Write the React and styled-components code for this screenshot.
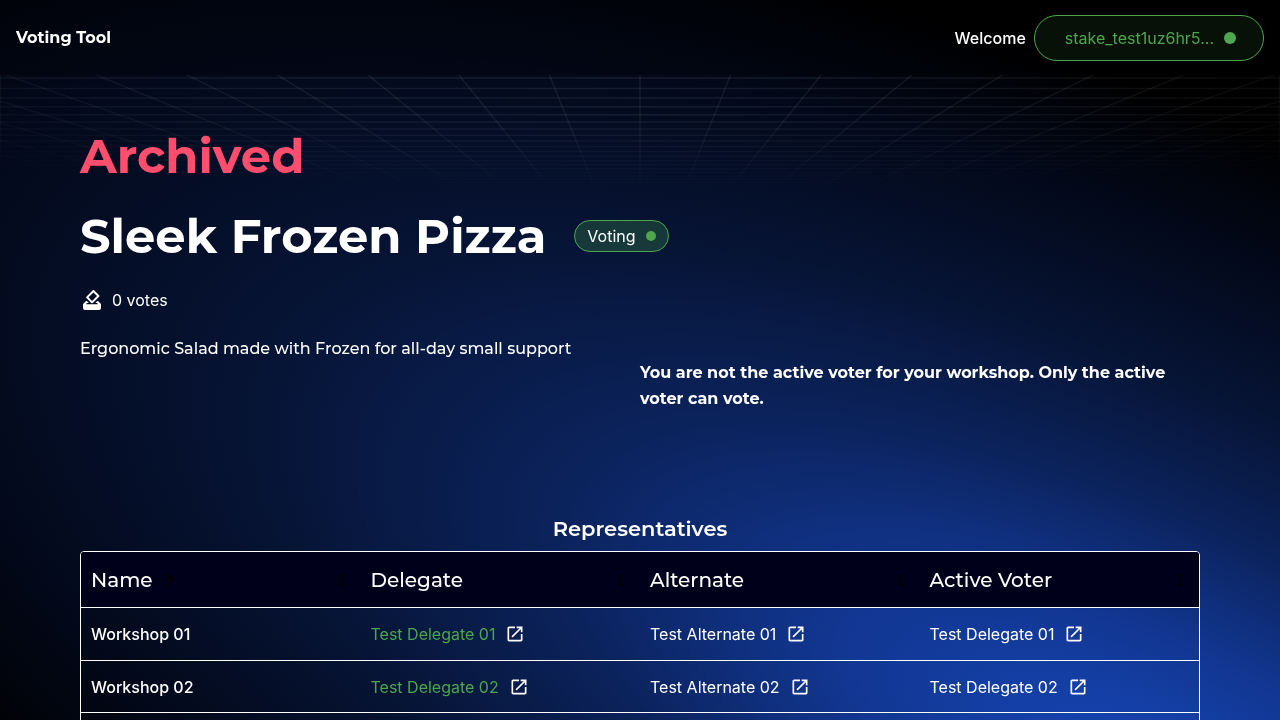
import React from 'react';
import styled, { createGlobalStyle } from 'styled-components';

const GlobalStyle = createGlobalStyle`
  * { box-sizing: border-box; }
  body {
    margin: 0;
    background: #000;
    color: #fff;
    font-family: Inter, "Liberation Sans", sans-serif;
    font-size: 16px;
    line-height: 24px;
  }
`;

const display = 'Montserrat, Inter, "Liberation Sans", sans-serif';

const Page = styled.div`
  position: relative;
  isolation: isolate;
  min-height: 100vh;
`;

const Glow = styled.svg`
  position: fixed;
  inset: 0;
  z-index: -2;
  width: 100%;
  height: 100%;
`;

const Grid = styled.svg`
  position: absolute;
  top: 75px;
  left: 0;
  z-index: -1;
  width: 100%;
  height: 120px;
`;

const Header = styled.header`
  display: flex;
  align-items: center;
  justify-content: space-between;
  padding: 15px 16px 14px;
  background: rgba(0, 0, 0, 0.25);
`;

const Brand = styled.a`
  color: inherit;
  font-family: ${display};
  font-weight: 700;
  text-decoration: none;
`;

const Account = styled.div`
  display: flex;
  align-items: center;
  gap: 8px;
  font-weight: 500;
`;

const WalletButton = styled.button`
  display: flex;
  align-items: center;
  gap: 10px;
  height: 46px;
  padding: 0 27px 0 30px;
  border: 1px solid #4ca64c;
  border-radius: 23px;
  background: rgba(76, 166, 76, 0.1);
  color: #4ca64c;
  font: 400 16px/24px Inter, "Liberation Sans", sans-serif;
`;

const Dot = styled.span`
  width: ${(p) => p.$size}px;
  height: ${(p) => p.$size}px;
  border-radius: 50%;
  background: #4fa64f;
`;

const Main = styled.main`
  padding: 53px 80px 40px;
`;

const Heading = styled.h1`
  margin: 0;
  color: ${(p) => p.$color || '#fff'};
  font-family: ${display};
  font-size: 48px;
  font-weight: 700;
  line-height: 56px;
`;

const TitleRow = styled.div`
  display: flex;
  align-items: center;
  gap: 28px;
  margin-top: 24px;
`;

const Status = styled.span`
  display: flex;
  align-items: center;
  gap: 10px;
  height: 32px;
  padding: 0 12px;
  border: 1px solid #4ca64c;
  border-radius: 16px;
  background: rgba(76, 166, 76, 0.25);
`;

const Votes = styled.div`
  display: flex;
  align-items: center;
  gap: 8px;
  margin-top: 24px;
`;

const Columns = styled.div`
  display: grid;
  grid-template-columns: 1fr 1fr;
  min-height: 177px;
  margin-top: 24px;
  font-family: ${display};
  line-height: 26px;
`;

const Description = styled.p`
  margin: 0;
  font-weight: 500;
`;

const Notice = styled.p`
  margin: 24px 0 0;
  font-weight: 700;
`;

const SectionTitle = styled.h2`
  margin: 0 0 8px;
  padding-top: 2px;
  font-family: ${display};
  font-size: 21px;
  font-weight: 600;
  line-height: 28px;
  text-align: center;
`;

const TableFrame = styled.div`
  overflow: hidden;
  border: 1px solid #fff;
  border-radius: 4px;
`;

const Table = styled.table`
  width: 100%;
  border-spacing: 0;
  table-layout: fixed;
`;

const HeadCell = styled.th`
  height: 56px;
  padding: 0 10px;
  border-bottom: 1px solid #fff;
  background: #00001a;
  font-family: ${display};
  font-size: 20px;
  font-weight: 500;
  text-align: left;
`;

const HeadInner = styled.div`
  display: flex;
  align-items: center;
  gap: 8px;
`;

const MenuIcon = styled.svg`
  margin-left: auto;
`;

const Cell = styled.td`
  height: ${(p) => (p.$first ? 53 : 52)}px;
  padding: 0 10px;
  border-bottom: 1px solid #fff;
`;

const NameCell = styled(Cell).attrs({ as: 'th', scope: 'row' })`
  font-weight: 500;
  text-align: left;
`;

const Person = styled.div`
  display: flex;
  align-items: center;
  gap: 10px;
  color: ${(p) => (p.$active ? '#4ca64c' : '#fff')};
`;

const OpenLink = styled.a`
  display: flex;
  color: #fff;
`;

const PersonEntry = ({ name, active }) => (
  <Person $active={active}>
    {name}
    <OpenLink href="#" aria-label={`Open ${name}`}>
      <svg width="20" height="20" viewBox="0 0 24 24" fill="currentColor">
        <path d="M19 19H5V5h7V3H5c-1.11 0-2 .9-2 2v14c0 1.1.89 2 2 2h14c1.1 0 2-.9 2-2v-7h-2zM14 3v2h3.59l-9.83 9.83 1.41 1.41L19 6.41V10h2V3z" />
      </svg>
    </OpenLink>
  </Person>
);

const headings = ['Name', 'Delegate', 'Alternate', 'Active Voter'];
const workshops = ['01', '02', '03'];

const raysX = Array.from({ length: 41 }, (_, i) => i - 20);
const rowsY = Array.from({ length: 22 }, (_, i) => 223 - 1 / (0.004545 + i * 0.000228));

export default function App() {
  return (
    <Page>
      <GlobalStyle />
      <Glow viewBox="0 0 1280 720" preserveAspectRatio="none" aria-hidden="true">
        <defs>
          <radialGradient
            id="glow"
            gradientUnits="userSpaceOnUse"
            cx="0"
            cy="0"
            r="1"
            gradientTransform="translate(1150 770) rotate(-155) scale(1642 627)"
          >
            <stop offset="0" stopColor="#1645b4" />
            <stop offset="0.2" stopColor="#123793" />
            <stop offset="0.4" stopColor="#0b225a" />
            <stop offset="0.6" stopColor="#061333" />
            <stop offset="0.8" stopColor="#03091b" />
            <stop offset="1" stopColor="#000" />
          </radialGradient>
        </defs>
        <rect width="1280" height="720" fill="url(#glow)" />
      </Glow>
      <Grid viewBox="0 0 1280 120" preserveAspectRatio="none" aria-hidden="true">
        <defs>
          <radialGradient
            id="fade"
            gradientUnits="userSpaceOnUse"
            cx="0"
            cy="0"
            r="1"
            gradientTransform="translate(640 0) scale(1100 118)"
          >
            <stop offset="0" stopColor="#fff" />
            <stop offset="0.4" stopColor="#fff" stopOpacity="0.8" />
            <stop offset="1" stopColor="#fff" stopOpacity="0" />
          </radialGradient>
          <mask id="fadeMask" maskUnits="userSpaceOnUse" x="0" y="0" width="1280" height="120">
            <rect width="1280" height="120" fill="url(#fade)" />
          </mask>
        </defs>
        <g mask="url(#fadeMask)" stroke="#fff" strokeOpacity="0.08" strokeWidth="1.5" fill="none">
          {raysX.map((n) => (
            <path key={n} d={`M${640 + n * 90.6} 0L640 223`} />
          ))}
          {rowsY.map((y) => (
            <path key={y} d={`M0 ${y}H1280`} />
          ))}
          <path d="M.5 0V120M1279.5 0V120" />
        </g>
      </Grid>

      <Header>
        <Brand href="#">Voting Tool</Brand>
        <Account>
          Welcome
          <WalletButton type="button">
            stake_test1uz6hr5...
            <Dot $size={12} />
          </WalletButton>
        </Account>
      </Header>

      <Main>
        <Heading as="div" $color="#ff4d6d">Archived</Heading>
        <TitleRow>
          <Heading>Sleek Frozen Pizza</Heading>
          <Status>
            Voting
            <Dot $size={10} />
          </Status>
        </TitleRow>
        <Votes>
          <svg width="24" height="24" viewBox="0 0 24 24" fill="currentColor" aria-hidden="true">
            <path d="M17 7.95l-4.95 4.95-3.54-3.54 4.95-4.95L17 7.95zm-4.24-5.66L6.39 8.66c-.39.39-.39 1.02 0 1.41l4.95 4.95c.39.39 1.02.39 1.41 0l6.36-6.36c.39-.39.39-1.02 0-1.41L14.16 2.3c-.38-.4-1.01-.4-1.4-.01z" />
            <path d="M6 13h.83l2 2H6.5v1.2h11V15h-2.18l2-2H18l3 3v4c0 1.1-.9 2-2 2H4.99C3.89 22 3 21.1 3 20v-4z" />
          </svg>
          0 votes
        </Votes>
        <Columns>
          <Description>Ergonomic Salad made with Frozen for all-day small support</Description>
          <Notice>
            You are not the active voter for your workshop. Only the active voter can vote.
          </Notice>
        </Columns>

        <SectionTitle>Representatives</SectionTitle>
        <TableFrame>
          <Table>
            <thead>
              <tr>
                {headings.map((h, i) => (
                  <HeadCell key={h} scope="col">
                    <HeadInner>
                      {h}
                      {i === 0 && (
                        <svg width="18" height="18" viewBox="0 0 24 24" fill="#000" aria-hidden="true">
                          <path d="M4 12l1.41 1.41L11 7.83V20h2V7.83l5.58 5.59L20 12l-8-8-8 8z" />
                        </svg>
                      )}
                      <MenuIcon width="18" height="18" viewBox="0 0 24 24" fill="#000" aria-hidden="true">
                        <path d="M12 8a2 2 0 1 0 0-4 2 2 0 0 0 0 4zm0 2a2 2 0 1 0 0 4 2 2 0 0 0 0-4zm0 6a2 2 0 1 0 0 4 2 2 0 0 0 0-4z" />
                      </MenuIcon>
                    </HeadInner>
                  </HeadCell>
                ))}
              </tr>
            </thead>
            <tbody>
              {workshops.map((n, i) => (
                <tr key={n}>
                  <NameCell $first={i === 0}>Workshop {n}</NameCell>
                  <Cell><PersonEntry name={`Test Delegate ${n}`} active /></Cell>
                  <Cell><PersonEntry name={`Test Alternate ${n}`} /></Cell>
                  <Cell><PersonEntry name={`Test Delegate ${n}`} /></Cell>
                </tr>
              ))}
            </tbody>
          </Table>
        </TableFrame>
      </Main>
    </Page>
  );
}
